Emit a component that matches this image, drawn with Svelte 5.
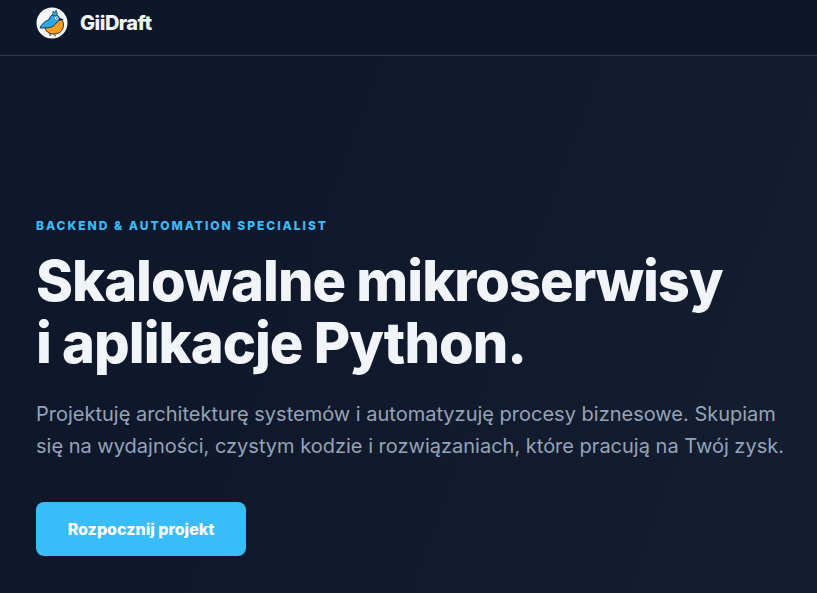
<script>
	const title = ['Skalowalne mikroserwisy', 'i aplikacje Python.'];
</script>

<div class="page">
	<header class="topbar">
		<a class="brand" href="#top">
			<svg class="logo" viewBox="0 0 32 32" width="32" height="32" aria-hidden="true">
				<circle cx="16" cy="16" r="15.500" fill="#f4f8fa" />
				<path d="M9 19c0 5.500 4 8.500 10 8 5.500-.5 9-5 8.500-10-.2-2.500-1.200-4-3-5l-10 2.500z" fill="#f59d22" stroke="#2a2018" stroke-width=".9" />
				<path d="M4 21c1.500-4 5-7 8.500-8 1-3 3-5.500 6-5.500 2.500 0 4.500 1.500 5 4 .2 1.500-1 3-2.500 3.500-1.500 2.500-4 5-7.500 5.500-3 .5-6 .5-9.500.5z" fill="#2aa8e8" stroke="#18293a" stroke-width=".9" />
				<path d="M16.500 8.500l.5-4.500 2 1.500 1-2.500 1.500 3.500-1 2.500z" fill="#2aa8e8" stroke="#18293a" stroke-width=".6" />
				<path d="M23.500 11l4.500 1.500-5 1.500z" fill="#1b1b1b" />
				<ellipse cx="20.500" cy="11" rx="1.800" ry="1.500" fill="#fff" />
				<circle cx="21" cy="11" r=".7" fill="#111" />
				<path d="M14 26.500v2.500M19 27.500v2" stroke="#2a2018" stroke-width="1" />
			</svg>
			<span>GiiDraft</span>
		</a>
	</header>

	<main class="hero">
		<p class="eyebrow">BACKEND &amp; AUTOMATION SPECIALIST</p>
		<h1>
			{#each title as line}
				<span>{line}</span>
			{/each}
		</h1>
		<p class="lead">
			Projektuję architekturę systemów i automatyzuję procesy biznesowe. Skupiam się na wydajności,
			czystym kodzie i rozwiązaniach, które pracują na Twój zysk.
		</p>
		<a class="cta" href="#contact">Rozpocznij projekt</a>
	</main>
</div>

<style>
	:global(body) {
		background: #0e1729;
		overflow: hidden;
	}

	.page {
		height: 593px;
		overflow: hidden;
		font-family: Inter, 'Liberation Sans', sans-serif;
		background: #0e1729;
		color: #f1f5f9;
		display: flex;
		flex-direction: column;
	}

	.topbar {
		flex: none;
		height: 55px;
		border-bottom: 1px solid #2a3a4c;
		padding: 0 36px;
		display: flex;
		align-items: flex-start;
	}

	.brand {
		display: flex;
		align-items: center;
		gap: 12px;
		padding-top: 7px;
		color: #f1f5f9;
		text-decoration: none;
		font-size: 20px;
		font-weight: 800;
		letter-spacing: -0.5px;
	}

	.logo {
		display: block;
	}

	.hero {
		flex: 1;
		padding: 162px 24px 0 36px;
		background: linear-gradient(110deg, #0f182a 25%, #151e30 100%);
	}

	.eyebrow {
		margin: 0;
		color: #38bdf8;
		font-size: 12px;
		line-height: 16px;
		font-weight: 800;
		letter-spacing: 1.97px;
	}

	h1 {
		margin: 16px 0 0;
		font-size: 56px;
		line-height: 62px;
		font-weight: 800;
		letter-spacing: -1px;
		color: #f1f5f9;
	}

	h1 span {
		display: block;
	}

	.lead {
		margin: 24px 0 0;
		color: #94a3b8;
		font-size: 20px;
		line-height: 32px;
	}

	.cta {
		margin-top: 40px;
		width: 210px;
		height: 54px;
		display: flex;
		align-items: center;
		justify-content: center;
		border-radius: 8px;
		background: #38bdf8;
		color: #fff;
		text-decoration: none;
		font-size: 16px;
		font-weight: 800;
	}
</style>
